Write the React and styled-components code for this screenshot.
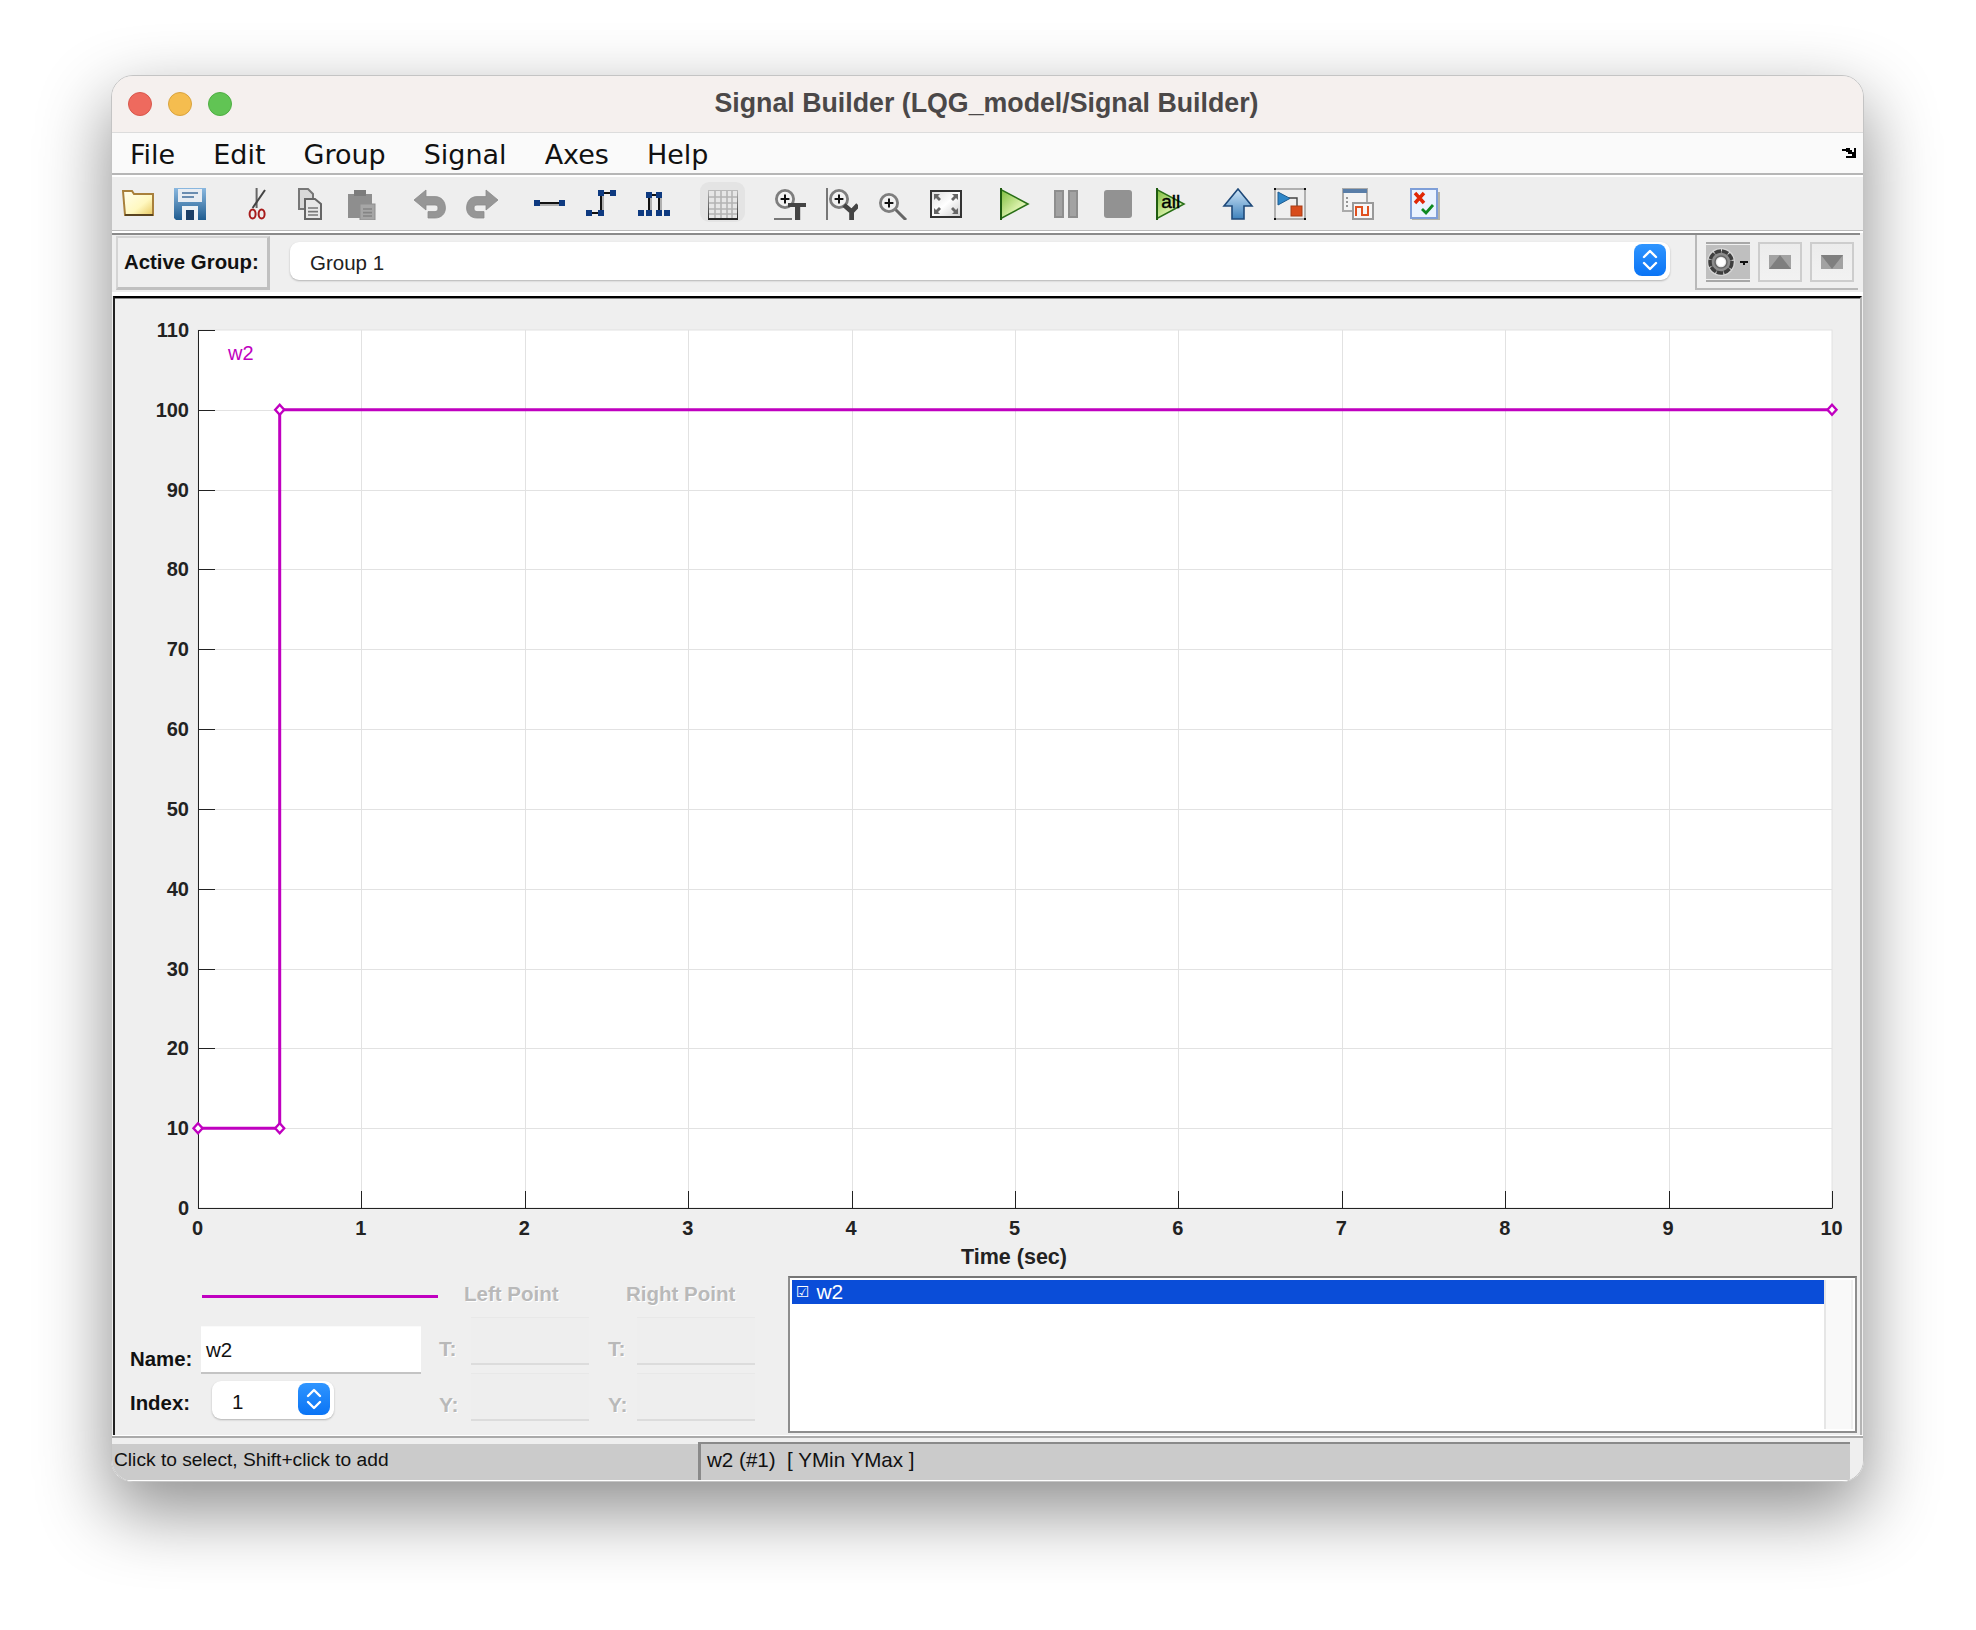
import React from "react";
import styled, { createGlobalStyle } from "styled-components";

const GlobalStyle = createGlobalStyle`
  html, body {
    margin: 0;
    padding: 0;
    background: #fff;
  }
  body {
    width: 1976px;
    height: 1630px;
    overflow: hidden;
    font-family: "Liberation Sans", Arial, sans-serif;
  }
`;

const Stage = styled.div`
  padding: 75px 0 0 111px;
`;

const Window = styled.div`
  width: 1753px;
  height: 1407px;
  box-sizing: border-box;
  display: flex;
  flex-direction: column;
  background: #efefef;
  border: 1px solid #c4c4c4;
  border-radius: 22px;
  overflow: hidden;
`;

const Shadow = styled.div`
  width: 1753px;
  border-radius: 22px;
  box-shadow: 0 28px 70px 2px rgba(0, 0, 0, 0.44);
`;

const TitleBar = styled.div`
  position: relative;
  height: 56px;
  flex: none;
  display: flex;
  align-items: center;
  justify-content: center;
  background: #f5f0ee;
  border-bottom: 1px solid #dcdcdc;
`;

const Lights = styled.div`
  position: absolute;
  left: 16px;
  top: 16px;
  display: flex;
  gap: 16px;
`;

const Light = styled.span`
  width: 24px;
  height: 24px;
  border-radius: 50%;
  box-sizing: border-box;
  background: ${(p) => p.$color};
  border: 1px solid ${(p) => p.$edge};
`;

const Title = styled.div`
  font-size: 26.75px;
  font-weight: 700;
  color: #4b4848;
  margin: 0 2px 2px 0;
`;

const MenuBar = styled.div`
  height: 40px;
  flex: none;
  display: flex;
  align-items: center;
  justify-content: space-between;
  padding: 0 7px 0 18px;
  background: #fafafa;
  border-bottom: 2px solid #b6b6b6;
`;

const Menus = styled.div`
  display: flex;
  gap: 38px;
  padding-top: 2px;
`;

const MenuItem = styled.span`
  font-family: "DejaVu Sans", sans-serif;
  font-size: 27px;
  color: #111;
`;

const WhiteGap = styled.div`
  height: ${(p) => p.$h}px;
  flex: none;
  background: #fff;
`;

const Toolbar = styled.div`
  height: 54px;
  flex: none;
  box-sizing: border-box;
  display: flex;
  align-items: flex-start;
  padding: 11px 0 0 10px;
  background: #eeeeee;
  border-bottom: 1px solid #bbb;
`;

const ToolButton = styled.div`
  position: relative;
  width: 32px;
  height: 32px;
  flex: none;
  margin-left: ${(p) => p.$gap || 0}px;

  ${(p) =>
    p.$active &&
    `&::before {
      content: "";
      position: absolute;
      inset: -6px -6px -2px -7px;
      background: #e4e4e4;
      border-radius: 9px;
    }`}

  svg {
    position: relative;
    display: block;
  }
`;

const HeavyRule = styled.div`
  height: 2px;
  flex: none;
  margin-right: 3px;
  background: #8a8a8a;
`;

const GroupRow = styled.div`
  height: 57px;
  flex: none;
  display: flex;
  background: #efefef;
`;

const GroupLabel = styled.div`
  width: 154px;
  height: 54px;
  margin: 1px 0 0 4px;
  box-sizing: border-box;
  display: flex;
  align-items: center;
  padding-left: 6px;
  font-size: 20.4px;
  font-weight: 700;
  color: #111;
  border: 2px solid #d4d4d4;
  border-right: 3px solid #c0c0c0;
  border-bottom: 3px solid #c0c0c0;
`;

const Select = styled.div`
  width: 1380px;
  height: 38px;
  margin: 7px 0 0 20px;
  box-sizing: border-box;
  display: flex;
  align-items: center;
  justify-content: space-between;
  padding: 0 4px 0 20px;
  background: #fff;
  border-radius: 9px;
  box-shadow: 0 1px 2px rgba(0, 0, 0, 0.25);
  font-size: 20.5px;
  color: #222;
`;

const SelectText = styled.span`
  padding-top: 3px;
`;

const Stepper = styled.div`
  width: 32px;
  height: 32px;
  margin-bottom: 2px;
  flex: none;
  border-radius: 8px;
  background: linear-gradient(#2f95ff, #0a74f5);
  display: flex;
  align-items: center;
  justify-content: center;
`;

const GroupTools = styled.div`
  margin-left: 25px;
  width: 163px;
  height: 55px;
  box-sizing: border-box;
  display: flex;
  gap: 8px;
  padding: 7px 0 0 9px;
  border-left: 2px solid #b9b9b9;
  border-bottom: 2px solid #b9b9b9;
`;

const SquareButton = styled.div`
  width: 44px;
  height: 40px;
  box-sizing: border-box;
  display: flex;
  align-items: center;
  justify-content: center;
  background: linear-gradient(#ececec, #f2f2f2);
  border: 2px solid #cdcdcd;
`;

const GearButton = styled.div`
  width: 44px;
  height: 40px;
  box-sizing: border-box;
  display: flex;
  align-items: center;
  justify-content: center;
  background: #bfbfbf;
  border-top: 2px solid #a8a8a8;
  border-bottom: 2px solid #a8a8a8;
  box-shadow: inset 0 1px 0 #f0f0f0, inset 0 -1px 0 #f0f0f0;
`;

const Panel = styled.div`
  height: 1139px;
  flex: none;
  box-sizing: border-box;
  margin: 0 1px 0 1px;
  display: flex;
  flex-direction: column;
  background: #efefef;
  border-top: 2px solid #000;
  border-left: 2px solid #222;
  border-right: 2px solid #b4b4b4;
  box-shadow: inset 0 1px 0 #888;
`;

const ChartSvg = styled.svg`
  display: block;
  flex: none;
  margin-top: 1px;
`;

const TickLabel = styled.text`
  font-family: "Liberation Sans", Arial, sans-serif;
  font-size: 20px;
  font-weight: 700;
  fill: #222;
`;

const AxisTitle = styled(TickLabel)`
  font-size: 21.5px;
`;

const SeriesName = styled.text`
  font-family: "Liberation Sans", Arial, sans-serif;
  font-size: 20px;
  fill: #c000c0;
`;

const Form = styled.div`
  display: flex;
  height: 157px;
  padding-left: 15px;
`;

const SignalColumn = styled.div`
  width: 309px;
  flex: none;
  display: flex;
  flex-direction: column;
`;

const Swatch = styled.div`
  width: 236px;
  height: 3px;
  margin: 19px 0 28px 72px;
  background: #c000c0;
`;

const FieldRow = styled.div`
  display: flex;
  align-items: ${(p) => p.$align || "center"};
  height: ${(p) => p.$h}px;
  margin-top: ${(p) => p.$mt || 0}px;
`;

const BoldLabel = styled.span`
  width: ${(p) => p.$w}px;
  flex: none;
  font-size: 20.4px;
  font-weight: 700;
  color: #111;
  padding-bottom: ${(p) => p.$pb || 0}px;
  padding-top: ${(p) => p.$pt || 0}px;
`;

const NameInput = styled.div`
  width: 220px;
  height: 48px;
  margin-left: 1px;
  box-sizing: border-box;
  padding: 11px 0 0 5px;
  background: #fff;
  border-top: 1px solid #fafafa;
  border-bottom: 2px solid #c4c4c4;
  font-size: 20.5px;
  color: #111;
  line-height: 24px;
`;

const Spinner = styled.div`
  width: 122px;
  height: 38px;
  margin-left: 11px;
  box-sizing: border-box;
  display: flex;
  align-items: center;
  justify-content: space-between;
  padding: 0 4px 0 20px;
  background: #fff;
  border-radius: 9px;
  box-shadow: 0 1px 2px rgba(0, 0, 0, 0.25);
  font-size: 20.5px;
  color: #111;
`;

const PointColumn = styled.div`
  width: ${(p) => p.$w}px;
  flex: none;
`;

const PointTitle = styled.div`
  height: 41px;
  box-sizing: border-box;
  padding-top: 6px;
  padding-left: ${(p) => p.$indent}px;
  font-size: 20.5px;
  font-weight: 700;
  color: #b9b9b9;
  text-shadow: 1px 1px 0 #fff;
  white-space: nowrap;
`;

const PointRow = styled.div`
  display: grid;
  grid-template-columns: ${(p) => p.$labelW}px 118px;
  height: 48px;
  margin-bottom: 8px;
  align-items: center;
`;

const DisabledLabel = styled.span`
  padding-top: 16px;
  font-size: 21px;
  font-weight: 700;
  color: #b9b9b9;
  text-shadow: 1px 1px 0 #fff;
`;

const DisabledBox = styled.div`
  height: 48px;
  box-sizing: border-box;
  background: #eeeeee;
  border-top: 1px solid #e8e8e8;
  border-bottom: 2px solid #dcdcdc;
`;

const ListBox = styled.div`
  width: 1069px;
  height: 157px;
  margin-left: 33px;
  flex: none;
  box-sizing: border-box;
  display: flex;
  padding: 2px;
  background: #fff;
  border: 2px solid #8e8e8e;
  border-top-color: #757575;
`;

const ListBody = styled.div`
  flex: 1;
`;

const ListRow = styled.div`
  height: 24px;
  display: flex;
  align-items: center;
  gap: 5px;
  padding-left: 4px;
  background: #0a4dd8;
  color: #fff;
  font-size: 21px;
`;

const CheckGlyph = styled.span`
  font-family: "DejaVu Sans", sans-serif;
  font-size: 15px;
  margin-right: 2px;
`;

const ListGutter = styled.div`
  width: 29px;
  flex: none;
  box-sizing: border-box;
  background: #f9f9f9;
  border-left: 2px solid #e6e6e6;
  border-right: 2px solid #efefef;
`;

const StatusRow = styled.div`
  flex: 1;
  display: flex;
  padding-top: 6px;
  background: #efefef;
  border-top: 2px solid #aaa;
  border-bottom: 1px solid #fff;
  box-sizing: border-box;
`;

const StatusLeft = styled.div`
  width: 586px;
  flex: none;
  height: 36px;
  box-sizing: border-box;
  display: flex;
  align-items: center;
  padding: 0 0 4px 2px;
  background: #cbcbcb;
  font-size: 19.2px;
  color: #111;
`;

const StatusRight = styled.div`
  width: 1152px;
  height: 38px;
  margin-top: -2px;
  flex: none;
  box-sizing: border-box;
  display: flex;
  align-items: center;
  padding: 0 0 4px 6px;
  background: #cbcbcb;
  border-top: 2px solid #8a8a8a;
  border-left: 3px solid #8a8a8a;
  font-size: 20.6px;
  color: #111;
  white-space: pre;
`;

/* ---------- toolbar icons, 16 unit grid drawn at 32px ---------- */

const Ico = ({ children }) => (
  <svg width="32" height="32" viewBox="0 0 16 16">
    {children}
  </svg>
);

const Handle = ({ x, y }) => <rect x={x} y={y} width="3" height="3" fill="#0e3a80" />;

const FolderIcon = () => (
  <Ico>
    <defs>
      <linearGradient id="folderFill" x1="0" y1="0" x2="1" y2="1">
        <stop offset="0" stopColor="#fffef0" />
        <stop offset="0.6" stopColor="#fff8c0" />
        <stop offset="1" stopColor="#e8c860" />
      </linearGradient>
    </defs>
    <path d="M.5 1.5H5L6 3H15.5V13.5H1.5Z" fill="url(#folderFill)" stroke="#a8803c" />
    <rect x="1.5" y="13" width="14" height="1" fill="#5a4420" />
  </Ico>
);

const SaveIcon = () => (
  <Ico>
    <defs>
      <linearGradient id="saveFill" x1="0" y1="0" x2="0" y2="1">
        <stop offset="0" stopColor="#8ab8e0" />
        <stop offset="1" stopColor="#1f5c90" />
      </linearGradient>
    </defs>
    <path d="M0 0H16V16H1L0 15Z" fill="url(#saveFill)" />
    <rect x="2" y="0.5" width="12" height="6.5" fill="#e8ecf2" />
    <rect x="4" y="2" width="8" height="1" fill="#6a8cb0" />
    <rect x="4" y="4" width="6" height="1" fill="#6a8cb0" />
    <rect x="4" y="9" width="8" height="7" fill="#eef2f6" />
    <rect x="6" y="11" width="4" height="5" fill="#1c3f66" />
  </Ico>
);

const CutIcon = () => (
  <Ico>
    <path d="M7.8 0V10" stroke="#666" strokeWidth="1" />
    <path d="M12 1L5.8 10" stroke="#444" strokeWidth="1" />
    <ellipse cx="5.8" cy="13" rx="1.5" ry="2.3" fill="none" stroke="#a81c1c" />
    <ellipse cx="10.3" cy="13" rx="1.5" ry="2.3" fill="none" stroke="#a81c1c" />
  </Ico>
);

const CopyIcon = () => (
  <Ico>
    <path d="M2.5.5H7L9.5 3V10.5H2.5Z" fill="#d8d8d8" stroke="#777" />
    <path d="M5.5 5.5H10.5L13.5 8V15.5H5.5Z" fill="#e8e8e8" stroke="#666" />
    <path d="M7 10H12M7 11.8H12M7 13.5H12" stroke="#777" strokeWidth=".8" />
  </Ico>
);

const PasteIcon = () => (
  <Ico>
    <rect x="1" y="3" width="12" height="12" fill="#8e8e8e" />
    <rect x="4" y="1" width="6" height="3" fill="#7c7c7c" />
    <rect x="7" y="8" width="7.5" height="8" fill="#a6a6a6" stroke="#8e8e8e" strokeWidth=".5" />
    <path d="M8.5 10.5H13M8.5 12.3H13M8.5 14H13" stroke="#848484" strokeWidth=".8" />
  </Ico>
);

const UndoIcon = ({ flip }) => (
  <Ico>
    <g transform={flip ? "translate(16 0) scale(-1 1)" : undefined}>
      <path
        d="M0 6L6 1V4.3H10.5C14 4.3 15.7 7 15.7 10C15.7 13 13.5 15 10.5 15H7V11.8H10.5C11.5 11.8 12 11 12 10C12 9 11.5 8.5 10.5 8.5H6V11Z"
        fill="#969696"
        stroke="#8a8a8a"
        strokeWidth=".4"
      />
    </g>
  </Ico>
);

const LineIcon = () => (
  <Ico>
    <path d="M2 8.5H15" stroke="#b0b0b0" />
    <path d="M2 7.5H14" stroke="#111" />
    <Handle x={0} y={6} />
    <Handle x={12.5} y={6} />
  </Ico>
);

const StepIcon = () => (
  <Ico>
    <path d="M8.5 4V14" stroke="#b0b0b0" />
    <path d="M7.5 2.5V12.5M7.5 2.5H13.5M1.5 12.5H7.5" stroke="#111" fill="none" />
    <Handle x={6} y={1} />
    <Handle x={12} y={1} />
    <Handle x={0} y={11} />
    <Handle x={6} y={11} />
  </Ico>
);

const PulseIcon = () => (
  <Ico>
    <path d="M6.5 5V14M11.5 5V14" stroke="#b0b0b0" />
    <path d="M5.5 3.5V12.5M10.5 3.5V12.5M5.5 3.5H10.5" stroke="#111" fill="none" />
    <Handle x={4} y={2} />
    <Handle x={9} y={2} />
    <Handle x={0} y={11} />
    <Handle x={4} y={11} />
    <Handle x={9} y={11} />
    <Handle x={13} y={11} />
  </Ico>
);

const GridIcon = () => (
  <Ico>
    <defs>
      <linearGradient id="gridEdge" x1="0" y1="0" x2="0" y2="1">
        <stop offset="0" stopColor="#bbb" />
        <stop offset="1" stopColor="#222" />
      </linearGradient>
    </defs>
    <rect x="0.5" y="1" width="15" height="15" fill="url(#gridEdge)" />
    <rect x="1" y="1.5" width="14" height="13.5" fill="#e6e6e6" />
    <path d="M4 1.5V15M7 1.5V15M10 1.5V15M12.5 1.5V15M1 4.5H15M1 7.5H15M1 10.5H15M1 13H15" stroke="#b4b4b4" strokeWidth=".8" />
  </Ico>
);

const Lens = ({ cx, cy }) => (
  <>
    <circle cx={cx} cy={cy} r="4.3" fill="#f2f2f2" stroke="#7e7e7e" strokeWidth="1.4" />
    <path d={`M${cx - 2.2} ${cy}H${cx + 2.2}M${cx} ${cy - 2.2}V${cy + 2.2}`} stroke="#111" strokeWidth="1" />
  </>
);

const ZoomTIcon = () => (
  <Ico>
    <Lens cx={5.5} cy={5.5} />
    <rect x="0" y="15" width="9" height="1" fill="#777" />
    <rect x="7" y="7.5" width="9" height="2" fill="#444" />
    <rect x="10.5" y="8" width="2.6" height="8" fill="#444" />
  </Ico>
);

const ZoomYIcon = () => (
  <Ico>
    <rect x="0" y="0" width="1" height="16" fill="#777" />
    <Lens cx={6.5} cy={5.5} />
    <path d="M9 8.5L12.8 11.8L16 8.5M12.8 11.5V16" stroke="#444" strokeWidth="2.4" fill="none" />
  </Ico>
);

const ZoomIcon = () => (
  <Ico>
    <path d="M9.5 10.5L15 16" stroke="#666" strokeWidth="1.5" />
    <Lens cx={6.5} cy={7.5} />
  </Ico>
);

const FitIcon = () => (
  <Ico>
    <defs>
      <linearGradient id="fitFill" x1="0" y1="0" x2="1" y2="1">
        <stop offset="0" stopColor="#ddd" />
        <stop offset="0.5" stopColor="#fff" />
        <stop offset="1" stopColor="#ccc" />
      </linearGradient>
    </defs>
    <rect x="0.5" y="1.5" width="15" height="13" fill="url(#fitFill)" stroke="#333" />
    <path d="M2 3H5L4 4L5.5 5.5L4.5 6.5L3 5L2 6ZM14 3H11L12 4L10.5 5.5L11.5 6.5L13 5L14 6ZM2 13H5L4 12L5.5 10.5L4.5 9.5L3 11L2 10ZM14 13H11L12 12L10.5 10.5L11.5 9.5L13 11L14 10Z" fill="#666" />
  </Ico>
);

const PlayGradient = () => (
  <defs>
    <linearGradient id="playFill" x1="0" y1="0" x2="1" y2="1">
      <stop offset="0" stopColor="#7cbc3c" />
      <stop offset="0.6" stopColor="#d8f0a8" />
      <stop offset="1" stopColor="#eef8d0" />
    </linearGradient>
  </defs>
);

const PlayIcon = () => (
  <Ico>
    <PlayGradient />
    <path d="M1.5.8L15 8L1.5 15.2Z" fill="url(#playFill)" stroke="#2a7018" strokeWidth=".8" />
    <rect x="1" y="0" width="1" height="16" fill="#1f5c10" />
  </Ico>
);

const PauseIcon = () => (
  <Ico>
    <rect x="2.5" y="1.5" width="4" height="13" fill="#a2a2a2" stroke="#8e8e8e" />
    <rect x="9.5" y="1.5" width="4" height="13" fill="#a2a2a2" stroke="#8e8e8e" />
  </Ico>
);

const StopIcon = () => (
  <Ico>
    <rect x="1" y="1" width="14" height="14" rx="1.5" fill="#929292" />
  </Ico>
);

const AllIcon = () => (
  <Ico>
    <PlayGradient />
    <path d="M1.5.8L15 8L1.5 15.2Z" fill="url(#playFill)" stroke="#2a7018" strokeWidth=".8" />
    <rect x="1" y="0" width="1" height="16" fill="#1f5c10" />
    <text x="3.6" y="10" fontFamily="Liberation Sans, sans-serif" fontSize="9.5" fill="#000" stroke="#000" strokeWidth=".2">all</text>
  </Ico>
);

const UpIcon = () => (
  <Ico>
    <defs>
      <linearGradient id="upFill" x1="0" y1="0" x2="0" y2="1">
        <stop offset="0" stopColor="#cfe6f8" />
        <stop offset="1" stopColor="#3f82bc" />
      </linearGradient>
    </defs>
    <path d="M8 .5L15 9H11V15.5H5V9H1Z" fill="url(#upFill)" stroke="#1f4a7a" strokeWidth=".8" />
  </Ico>
);

const BlockIcon = () => (
  <Ico>
    <rect x="0.5" y="0.5" width="15" height="15" fill="#efefef" stroke="#b0b0b0" />
    <path d="M0 0H1V1H0ZM15 0H16V1H15ZM0 15H1V16H0ZM15 15H16V16H15Z" fill="#111" />
    <path d="M7 5H11.5V9" stroke="#444" strokeWidth=".7" fill="none" />
    <path d="M2 2L8 5.2L2 8.5Z" fill="#2e86c8" stroke="#1f5c90" strokeWidth=".5" />
    <rect x="8.5" y="9" width="5.5" height="5" fill="#d84c1c" stroke="#a83c14" strokeWidth=".5" />
  </Ico>
);

const SignalIcon = () => (
  <Ico>
    <rect x="0.5" y="0.5" width="12" height="11" fill="#f4f4f4" stroke="#aaa" />
    <rect x="0.5" y="0.5" width="12" height="2" fill="#5a7ea8" />
    <path d="M2 5H3M2 7H3M2 9H3" stroke="#777" strokeWidth=".8" />
    <rect x="5.5" y="7.5" width="10" height="8" fill="#f6f6f6" stroke="#999" />
    <path d="M7 14V9.5H10V13.5H13V9" stroke="#e0501e" fill="none" />
  </Ico>
);

const VerifyIcon = () => (
  <Ico>
    <rect x="2" y="2" width="14" height="14" fill="#b4b4a8" />
    <rect x="1.5" y="0.5" width="13" height="14.5" fill="#eaf3ff" stroke="#7f9fd8" />
    <path d="M3.5 2.5L8 7.5M8 2.5L3.5 7.5" stroke="#e02808" strokeWidth="1.7" />
    <path d="M7 10.5L9 12.5L12.5 8.5" stroke="#0e8a20" strokeWidth="1.4" fill="none" />
  </Ico>
);

const RedoIcon = () => <UndoIcon flip />;

const tools = [
  { Icon: FolderIcon, gap: 0 },
  { Icon: SaveIcon, gap: 20 },
  { Icon: CutIcon, gap: 35 },
  { Icon: CopyIcon, gap: 21 },
  { Icon: PasteIcon, gap: 20 },
  { Icon: UndoIcon, gap: 36 },
  { Icon: RedoIcon, gap: 20 },
  { Icon: LineIcon, gap: 36 },
  { Icon: StepIcon, gap: 20 },
  { Icon: PulseIcon, gap: 20 },
  { Icon: GridIcon, gap: 37, active: true },
  { Icon: ZoomTIcon, gap: 35 },
  { Icon: ZoomYIcon, gap: 20 },
  { Icon: ZoomIcon, gap: 18 },
  { Icon: FitIcon, gap: 22 },
  { Icon: PlayIcon, gap: 36 },
  { Icon: PauseIcon, gap: 20 },
  { Icon: StopIcon, gap: 20 },
  { Icon: AllIcon, gap: 20 },
  { Icon: UpIcon, gap: 36 },
  { Icon: BlockIcon, gap: 20 },
  { Icon: SignalIcon, gap: 36 },
  { Icon: VerifyIcon, gap: 34 },
];

const Chevrons = () => (
  <svg width="18" height="26" viewBox="0 0 18 26">
    <path d="M3 10L9 4L15 10M3 16L9 22L15 16" stroke="#fff" strokeWidth="2.4" fill="none" strokeLinecap="round" strokeLinejoin="round" />
  </svg>
);

const CornerArrow = styled.svg`
  display: block;
`;

const Gear = () => (
  <svg width="44" height="36" viewBox="0 0 44 36">
    <circle cx="15" cy="18" r="14" fill="#d6d6d6" />
    <circle cx="15" cy="18" r="11" fill="#8c8c8c" stroke="#3e3e3e" strokeWidth="3.5" strokeDasharray="6.5 1" />
    <circle cx="15" cy="18" r="6" fill="#e8e8e8" stroke="#666" strokeWidth="1.5" />
    <circle cx="15" cy="18" r="4" fill="#fff" />
    <rect x="34" y="17" width="8" height="2" fill="#111" />
    <rect x="37" y="19" width="2" height="2" fill="#111" />
  </svg>
);

const Tri = ({ down }) => (
  <svg width="22" height="14" viewBox="0 0 22 14">
    <rect width="22" height="14" fill="#a2a2a2" />
    <path d={down ? "M0 0H22L11 14Z" : "M11 0L22 14H0Z"} fill="#7f7f7f" />
  </svg>
);

/* plot coordinates are page pixels, the viewBox starts at the svg's own corner */
const LEFT = 198;
const RIGHT = 1832;
const TOP = 330;
const BOTTOM = 1208;
const xAt = (t) => LEFT + ((RIGHT - LEFT) * t) / 10;
const yAt = (v) => BOTTOM - ((BOTTOM - TOP) * v) / 110;

const xTicks = [0, 1, 2, 3, 4, 5, 6, 7, 8, 9, 10];
const yTicks = [0, 10, 20, 30, 40, 50, 60, 70, 80, 90, 100, 110];
const points = [
  [0, 10],
  [0.5, 10],
  [0.5, 100],
  [10, 100],
];

const Chart = () => (
  <ChartSvg width="1745" height="977" viewBox="115 299 1745 977">
    <rect x={LEFT} y={TOP} width={RIGHT - LEFT} height={BOTTOM - TOP} fill="#fff" stroke="#e2e2e2" />
    {xTicks.slice(1, -1).map((t) => (
      <path key={t} d={`M${Math.round(xAt(t)) + 0.5} ${TOP}V${BOTTOM}`} stroke="#e2e2e2" />
    ))}
    {yTicks.slice(1, -1).map((v) => (
      <path key={v} d={`M${LEFT} ${Math.round(yAt(v)) + 0.5}H${RIGHT}`} stroke="#e2e2e2" />
    ))}
    <path d={`M${LEFT + 0.5} ${TOP}V${BOTTOM + 0.5}H${RIGHT + 0.5}`} fill="none" stroke="#222" />
    {xTicks.map((t) => (
      <path key={t} d={`M${Math.round(xAt(t)) + 0.5} ${BOTTOM}v-17`} stroke="#222" />
    ))}
    {yTicks.map((v) => (
      <path key={v} d={`M${LEFT} ${Math.round(yAt(v)) + 0.5}h17`} stroke="#222" />
    ))}
    {xTicks.map((t) => (
      <TickLabel key={t} x={xAt(t) - 0.5} y={1235} textAnchor="middle">
        {t}
      </TickLabel>
    ))}
    {yTicks.map((v) => (
      <TickLabel key={v} x={189} y={yAt(v) + 7} textAnchor="end">
        {v}
      </TickLabel>
    ))}
    <AxisTitle x={1014} y={1264} textAnchor="middle">
      Time (sec)
    </AxisTitle>
    <SeriesName x={228} y={360}>
      w2
    </SeriesName>
    <polyline
      points={points.map(([t, v]) => `${xAt(t)},${yAt(v)}`).join(" ")}
      fill="none"
      stroke="#c000c0"
      strokeWidth="3"
    />
    {points.map(([t, v]) => {
      const x = xAt(t);
      const y = yAt(v);
      return (
        <path
          key={`${t}-${v}`}
          d={`M${x - 4.5} ${y}L${x} ${y - 5}L${x + 4.5} ${y}L${x} ${y + 5}Z`}
          fill="#fff"
          stroke="#c000c0"
          strokeWidth="2.4"
        />
      );
    })}
  </ChartSvg>
);

const App = () => (
  <>
    <GlobalStyle />
    <Stage>
      <Shadow>
        <Window>
          <TitleBar>
            <Lights>
              <Light $color="#ee6a5e" $edge="#d8574c" />
              <Light $color="#f5bd4f" $edge="#d9a33e" />
              <Light $color="#61c454" $edge="#4fae43" />
            </Lights>
            <Title>Signal Builder (LQG_model/Signal Builder)</Title>
          </TitleBar>

          <MenuBar>
            <Menus>
              {["File", "Edit", "Group", "Signal", "Axes", "Help"].map((m) => (
                <MenuItem key={m}>{m}</MenuItem>
              ))}
            </Menus>
            <CornerArrow width="14" height="10" viewBox="0 0 14 10">
              <path d="M0 1H4V0H8V2H10V4H12V0H14V10H4V8H10V6H6V4H4V3H0Z" fill="#000" />
            </CornerArrow>
          </MenuBar>
          <WhiteGap $h={2} />

          <Toolbar>
            {tools.map(({ Icon, gap, active }, i) => (
              <ToolButton key={i} $gap={gap} $active={active}>
                <Icon />
              </ToolButton>
            ))}
          </Toolbar>
          <WhiteGap $h={2} />
          <HeavyRule />

          <GroupRow>
            <GroupLabel>Active Group:</GroupLabel>
            <Select>
              <SelectText>Group 1</SelectText>
              <Stepper>
                <Chevrons />
              </Stepper>
            </Select>
            <GroupTools>
              <GearButton>
                <Gear />
              </GearButton>
              <SquareButton>
                <Tri />
              </SquareButton>
              <SquareButton>
                <Tri down />
              </SquareButton>
            </GroupTools>
          </GroupRow>
          <WhiteGap $h={4} />

          <Panel>
            <Chart />
            <Form>
              <SignalColumn>
                <Swatch />
                <FieldRow $h={48} $align="flex-end">
                  <BoldLabel $w={70} $pb={3}>Name:</BoldLabel>
                  <NameInput>w2</NameInput>
                </FieldRow>
                <FieldRow $h={38} $mt={7}>
                  <BoldLabel $w={71} $pt={7}>Index:</BoldLabel>
                  <Spinner>
                    <SelectText>1</SelectText>
                    <Stepper>
                      <Chevrons />
                    </Stepper>
                  </Spinner>
                </FieldRow>
              </SignalColumn>

              <PointColumn $w={169}>
                <PointTitle $indent={25}>Left Point</PointTitle>
                <PointRow $labelW={32}>
                  <DisabledLabel>T:</DisabledLabel>
                  <DisabledBox />
                </PointRow>
                <PointRow $labelW={32}>
                  <DisabledLabel>Y:</DisabledLabel>
                  <DisabledBox />
                </PointRow>
              </PointColumn>

              <PointColumn $w={147}>
                <PointTitle $indent={18}>Right Point</PointTitle>
                <PointRow $labelW={29}>
                  <DisabledLabel>T:</DisabledLabel>
                  <DisabledBox />
                </PointRow>
                <PointRow $labelW={29}>
                  <DisabledLabel>Y:</DisabledLabel>
                  <DisabledBox />
                </PointRow>
              </PointColumn>

              <ListBox>
                <ListBody>
                  <ListRow>
                    <CheckGlyph>☑</CheckGlyph>
                    w2
                  </ListRow>
                </ListBody>
                <ListGutter />
              </ListBox>
            </Form>
          </Panel>
          <WhiteGap $h={1} />

          <StatusRow>
            <StatusLeft>Click to select, Shift+click to add</StatusLeft>
            <StatusRight>{"w2 (#1)  [ YMin YMax ]"}</StatusRight>
          </StatusRow>
        </Window>
      </Shadow>
    </Stage>
  </>
);

export default App;
